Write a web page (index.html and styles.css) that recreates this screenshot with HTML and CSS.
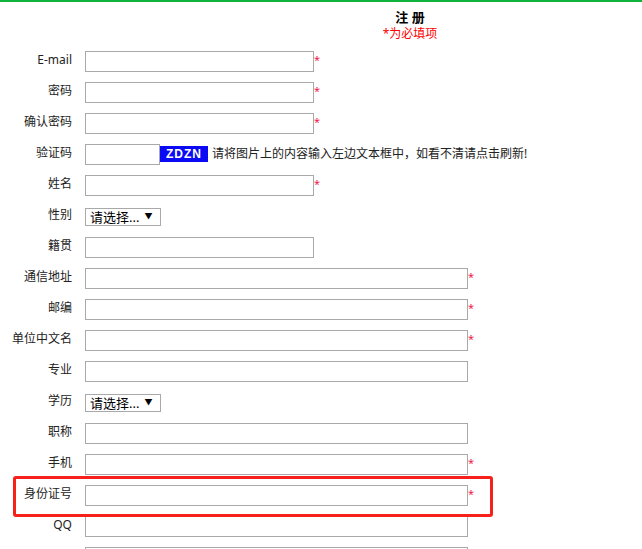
FILE: index.html
```html
<!DOCTYPE html>
<html lang="zh-CN">
<head>
    <meta charset="UTF-8">
    <meta name="viewport" content="width=device-width, initial-scale=1.0">
    <title>注册</title>
    <link rel="stylesheet" href="styles.css">
</head>
<body>
    <div class="topline"></div>
    <div class="head">
        <h1>注 册</h1>
        <p class="must">*为必填项</p>
    </div>

    <form class="reg">
        <div class="row">
            <label class="label">E-mail</label>
            <input class="txt" type="text"><span class="star">*</span>
        </div>
        <div class="row">
            <label class="label">密码</label>
            <input class="txt" type="password"><span class="star">*</span>
        </div>
        <div class="row">
            <label class="label">确认密码</label>
            <input class="txt" type="password"><span class="star">*</span>
        </div>
        <div class="row">
            <label class="label">验证码</label>
            <input class="txt code" type="text"><span class="captcha">ZDZN</span>
            <span class="hint">请将图片上的内容输入左边文本框中，如看不清请点击刷新!</span>
        </div>
        <div class="row">
            <label class="label">姓名</label>
            <input class="txt" type="text"><span class="star">*</span>
        </div>
        <div class="row">
            <label class="label">性别</label>
            <div class="sel"><span>请选择...</span><span class="arrow">▼</span></div>
        </div>
        <div class="row">
            <label class="label">籍贯</label>
            <input class="txt" type="text">
        </div>
        <div class="row">
            <label class="label">通信地址</label>
            <input class="txt long" type="text"><span class="star">*</span>
        </div>
        <div class="row">
            <label class="label">邮编</label>
            <input class="txt long" type="text"><span class="star">*</span>
        </div>
        <div class="row">
            <label class="label">单位中文名</label>
            <input class="txt long" type="text"><span class="star">*</span>
        </div>
        <div class="row">
            <label class="label">专业</label>
            <input class="txt long" type="text">
        </div>
        <div class="row">
            <label class="label">学历</label>
            <div class="sel"><span>请选择...</span><span class="arrow">▼</span></div>
        </div>
        <div class="row">
            <label class="label">职称</label>
            <input class="txt long" type="text">
        </div>
        <div class="row">
            <label class="label">手机</label>
            <input class="txt long" type="text"><span class="star">*</span>
        </div>
        <div class="row">
            <label class="label">身份证号</label>
            <input class="txt long" type="text"><span class="star">*</span>
        </div>
        <div class="row">
            <label class="label">QQ</label>
            <input class="txt long" type="text">
        </div>
        <div class="row">
            <label class="label"></label>
            <input class="txt long" type="text">
        </div>
    </form>

    <div class="mark"></div>
</body>
</html>
```

FILE: styles.css
```css
html {
    overflow: hidden;
}

body {
    margin: 0;
    padding: 0;
    font-family: "Noto Sans", "Noto Sans CJK SC", sans-serif;
    font-size: 12px;
    color: #222;
    background: #fff;
    position: relative;
}

.topline {
    height: 2px;
    background: #0fb33c;
}

/* the original page is wider than the window, title sits at x=410 */
.head {
    box-sizing: border-box;
    padding: 7px 0 0 178px;
    text-align: center;
}

.head h1 {
    margin: 0;
    font-size: 13px;
    line-height: 16px;
    font-weight: bold;
    color: #000;
}

.head .must {
    margin: 1px 0 0;
    font-size: 12px;
    line-height: 16px;
    color: #f00;
}

.reg {
    margin-top: 9px;
}

.row {
    display: flex;
    align-items: center;
    height: 21px;
    margin-bottom: 10px;
}

.label {
    width: 72px;
    padding-right: 13px;
    text-align: right;
    line-height: 16px;
    margin-top: -3px;
    flex-shrink: 0;
}

.txt {
    box-sizing: border-box;
    width: 229px;
    height: 21px;
    margin: 0;
    padding: 0 3px;
    border: 1px solid #a9a9a9;
    background: #fff;
    font-size: 12px;
}

.txt.long {
    width: 383px;
}

.txt.code {
    width: 75px;
}

.star {
    color: #f0204a;
    font-size: 11px;
    line-height: 11px;
    align-self: flex-start;
    margin-top: 3px;
}

.captcha {
    width: 48px;
    height: 16px;
    line-height: 16px;
    background: #0a0af5;
    color: #fff;
    font-family: "Liberation Sans", sans-serif;
    font-weight: bold;
    font-size: 12px;
    letter-spacing: 1px;
    text-align: center;
    margin-top: -1px;
}

.hint {
    margin-left: 4px;
    line-height: 16px;
    margin-top: -2px;
}

.sel {
    box-sizing: border-box;
    display: flex;
    align-items: center;
    width: 76px;
    height: 18px;
    border: 1px solid #a9a9a9;
    padding: 1px 0 0 4px;
    font-size: 13px;
    line-height: 16px;
    color: #000;
    white-space: nowrap;
}

.sel .arrow {
    font-size: 8px;
    line-height: 10px;
    margin-left: 5px;
    margin-top: -2px;
}

.mark {
    position: absolute;
    left: 13px;
    top: 476px;
    width: 474px;
    height: 35px;
    border: 3px solid #f5211a;
    border-radius: 3px;
}
```
